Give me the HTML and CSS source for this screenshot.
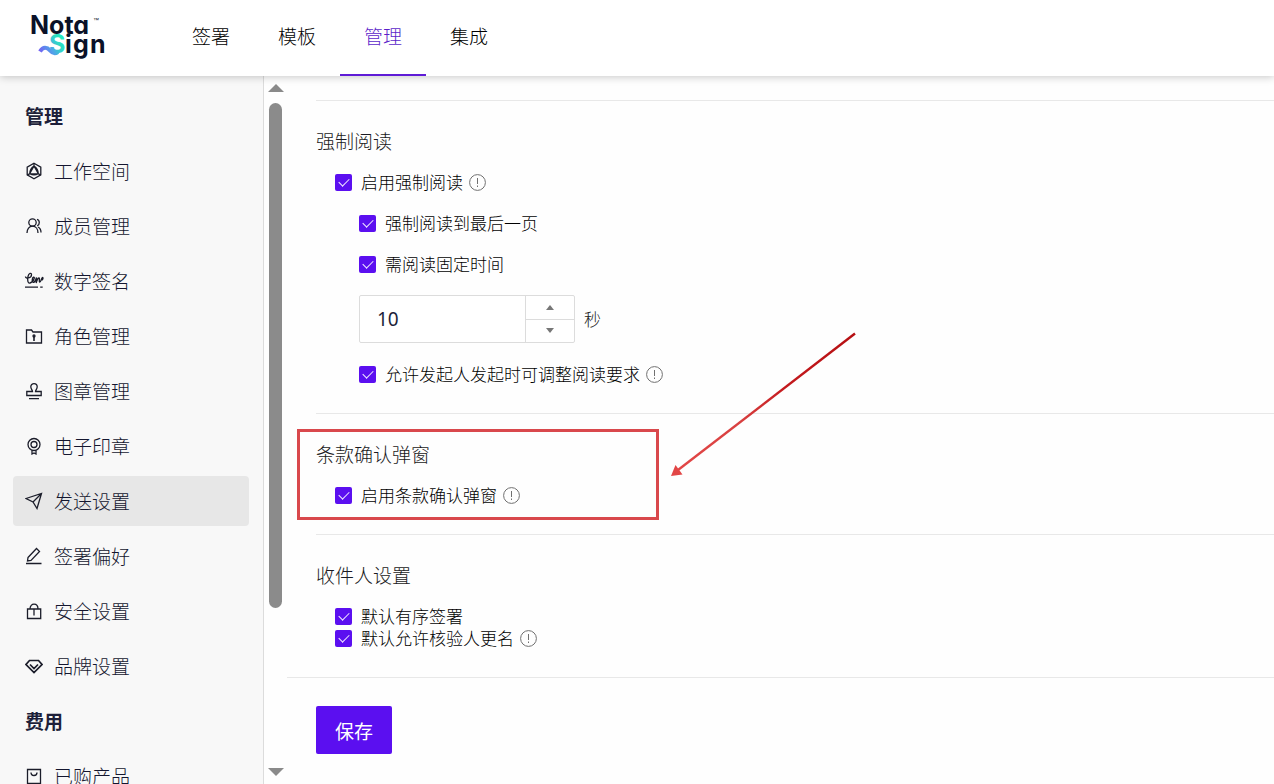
FILE: index.html
```html
<!DOCTYPE html>
<html lang="zh-CN">
<head>
<meta charset="utf-8">
<title>Nota Sign</title>
<link rel="stylesheet" href="styles.css">
</head>
<body>
<div class="app">
  <header class="header">
    <a class="logo" href="#" aria-label="Nota Sign">
      <svg width="80" height="50" viewBox="0 0 80 50">
        <defs>
          <linearGradient id="brand" gradientUnits="userSpaceOnUse" x1="6" y1="40" x2="30" y2="26">
            <stop offset="0" stop-color="#7a55f5"/><stop offset=".5" stop-color="#4fa5e8"/><stop offset=".8" stop-color="#2fd8c4"/><stop offset="1" stop-color="#25e8be"/>
          </linearGradient>
        </defs>
        <text class="logo-text" x="-2" y="21">Nota</text>
        <text class="logo-tm" x="61" y="9">™</text>
        <path d="M8 38.500c3-5 7-4.500 10-1s5 3.500 8 1.500" fill="none" stroke="url(#brand)" stroke-width="4"/>
        <text class="logo-text" x="17" y="40"><tspan fill="url(#brand)">S</tspan><tspan x="33">i</tspan><tspan x="41">g</tspan><tspan x="58">n</tspan></text>
      </svg>
    </a>
    <nav class="tabs">
      <a class="tab" href="#">签署</a>
      <a class="tab" href="#">模板</a>
      <a class="tab tab-active" href="#">管理</a>
      <a class="tab" href="#">集成</a>
    </nav>
  </header>
  <div class="body">
    <aside class="sidebar">
      <h2 class="group">管理</h2>
      <a class="item" href="#"><svg class="icon" viewBox="0 0 18 18"><path d="M9 1.200l6.800 3.900v7.800L9 16.800l-6.800-3.900V5.100z"/><path d="M9 4C6.500 5.500 4.800 8.500 4.700 11.800c2.600 1.400 6 1.400 8.600 0C13.200 8.500 11.500 5.500 9 4zM9 4L4.700 11.800h8.600zM9 1.200V4M2.200 12.900l2.500-1.100M15.800 12.900l-2.500-1.100"/></svg>工作空间</a>
      <a class="item" href="#"><svg class="icon" viewBox="0 0 18 18"><circle cx="7.500" cy="5.500" r="3.700"/><path d="M2 16c0-4 2.200-6.800 5.500-6.800S13 12 13 16M12 2.300c3 .8 3 5.400.2 6.600M13 10c2 1 3 3 3 5.500"/></svg>成员管理</a>
      <a class="item" href="#"><svg class="icon icon-wide" viewBox="0 0 18 18"><path d="M.5 4.500C.5 7 6.500 6.500 6.500 2.800 6.500.5 3.800.8 3 4.500s-.2 7 2 6.500 3.500-2.500 4.200-4.500S7.400 4.500 7.200 8s2.800 3.500 4.300-2.500L11.200 11c.8-3 1.800-5 2.800-5s-.3 4 .8 4 1.700-4.500 2.700-4.500.3 2.500-.7 2.500"/><path d="M0 15.200h13M15.200 15.200h2.500"/></svg>数字签名</a>
      <a class="item" href="#"><svg class="icon" viewBox="0 0 18 18"><path d="M1.500 3h5l1.500 2h8.500v11h-15z"/><path d="M9 9v5" stroke-width="1.600"/><circle cx="9" cy="9" r="1"/></svg>角色管理</a>
      <a class="item" href="#"><svg class="icon" viewBox="0 0 18 18"><path d="M7.500 9.500c0-1.500-1.700-2.500-1.700-4.700a3.200 3.200 0 0 1 6.400 0c0 2.200-1.700 3.200-1.700 4.700h5.700v4H1.800v-4zM4 16.700h10"/></svg>图章管理</a>
      <a class="item" href="#"><svg class="icon" viewBox="0 0 18 18"><circle cx="9" cy="7.500" r="6"/><circle cx="9" cy="7.500" r="3"/><path d="M7 13.500V17l2-1 2 1v-3.500"/></svg>电子印章</a>
      <a class="item item-active" href="#"><svg class="icon" viewBox="0 0 18 18"><path d="M1 6.500L16.500 1.500 12 16.500 8 10zM8 10l8.500-8.500"/></svg>发送设置</a>
      <a class="item" href="#"><svg class="icon" viewBox="0 0 18 18"><path d="M3 10.500l8.500-9 3 3-8.500 9-3.500.5zM1 16.500h15.500"/></svg>签署偏好</a>
      <a class="item" href="#"><svg class="icon" viewBox="0 0 18 18"><path d="M2.500 7h13.200v9.500H2.500zM5 7c0-6.500 8-6.500 8 0M9 7v6.500"/></svg>安全设置</a>
      <a class="item" href="#"><svg class="icon icon-strong" viewBox="0 0 18 18"><path d="M4.500 3.500h9l3.500 4-8 8-8-8zM5 7.500l4 4 4-4"/></svg>品牌设置</a>
      <h2 class="group">费用</h2>
      <a class="item" href="#"><svg class="icon" viewBox="0 0 18 18"><path d="M2.500 2.500h13v14h-13zM6 5.500c0 4 6 4 6 0"/></svg>已购产品</a>
    </aside>
    <div class="scroll" aria-hidden="true">
      <span class="arrow-up"></span>
      <div class="track"><div class="thumb"></div></div>
      <span class="arrow-down"></span>
    </div>
    <main class="main">
      <form class="form">
        <section class="section">
          <h3 class="title">强制阅读</h3>
          <div class="rows rows-spaced">
            <div class="row"><label class="check"><input type="checkbox" checked>启用强制阅读</label><svg class="info" viewBox="0 0 17 17"><circle cx="8.500" cy="8.500" r="7.900"/><path d="M8.500 4v6M8.500 11.500V13"/></svg></div>
            <div class="row row-nested"><label class="check"><input type="checkbox" checked>强制阅读到最后一页</label></div>
            <div class="row row-nested"><label class="check"><input type="checkbox" checked>需阅读固定时间</label></div>
            <div class="row-nested duration">
              <div class="number">
                <input class="number-input" id="seconds" type="number" value="10">
                <div class="steps">
                  <button class="step" type="button" aria-label="增加"><span class="step-up"></span></button>
                  <button class="step" type="button" aria-label="减少"><span class="step-down"></span></button>
                </div>
              </div>
              <label for="seconds">秒</label>
            </div>
            <div class="row row-nested"><label class="check"><input type="checkbox" checked>允许发起人发起时可调整阅读要求</label><svg class="info" viewBox="0 0 17 17"><circle cx="8.500" cy="8.500" r="7.900"/><path d="M8.500 4v6M8.500 11.500V13"/></svg></div>
          </div>
        </section>
        <section class="section">
          <h3 class="title">条款确认弹窗</h3>
          <div class="rows">
            <div class="row"><label class="check"><input type="checkbox" checked>启用条款确认弹窗</label><svg class="info" viewBox="0 0 17 17"><circle cx="8.500" cy="8.500" r="7.900"/><path d="M8.500 4v6M8.500 11.500V13"/></svg></div>
          </div>
          <div class="highlight"></div>
          <svg class="pointer" width="190" height="150" viewBox="0 0 190 150">
            <defs><linearGradient id="red" gradientUnits="userSpaceOnUse" x1="185" y1="3" x2="8" y2="140"><stop offset="0" stop-color="#b50f12"/><stop offset=".4" stop-color="#c41a1e"/><stop offset=".65" stop-color="#d84040"/><stop offset="1" stop-color="#e24646"/></linearGradient></defs>
            <path d="M184 3.500L7 140" fill="none" stroke="url(#red)" stroke-width="2.400"/>
            <path d="M0 146l4.500-11 7 9.500z" fill="#e24646"/>
          </svg>
        </section>
        <section class="section">
          <h3 class="title">收件人设置</h3>
          <div class="rows">
            <div class="row"><label class="check"><input type="checkbox" checked>默认有序签署</label></div>
            <div class="row"><label class="check"><input type="checkbox" checked>默认允许核验人更名</label><svg class="info" viewBox="0 0 17 17"><circle cx="8.500" cy="8.500" r="7.900"/><path d="M8.500 4v6M8.500 11.500V13"/></svg></div>
          </div>
        </section>
        <div class="footer"><button class="save" type="button">保存</button></div>
      </form>
    </main>
  </div>
</div>
</body>
</html>
```
FILE: styles.css
```css
* { box-sizing: border-box; }
body {
  margin: 0;
  font-family: "Noto Sans CJK SC", sans-serif;
  font-weight: 300;
  font-size: 17px;
  color: #000;
  background: #fefefe;
}
a { color: inherit; text-decoration: none; }
h2, h3 { margin: 0; }

.app { display: flex; flex-direction: column; height: 100vh; overflow: hidden; }

.header {
  display: flex;
  flex: none;
  height: 76px;
  padding-left: 32px;
  background: #fff;
  box-shadow: 0 1px 8px rgba(0, 0, 0, 0.22);
  z-index: 1;
}
.logo { width: 136px; padding-top: 13px; }
.logo svg { display: block; overflow: visible; }
.logo-text { font: 700 25px Inter, sans-serif; font-feature-settings: "cv11"; fill: #0a1128; }
.logo-tm { font: 400 6px "Liberation Sans", sans-serif; fill: #0a1128; }
.tabs { display: flex; }
.tab {
  padding: 0 24px;
  font-size: 19px;
  line-height: 72px;
  border-bottom: 2px solid transparent;
}
.tab-active { color: #5c1fc9; border-bottom-color: #5f1bd6; }

.body { display: flex; flex: 1; min-height: 0; }

.sidebar {
  display: flex;
  flex-direction: column;
  gap: 5px;
  flex: none;
  width: 264px;
  padding: 15px 14px 0 13px;
  overflow: hidden;
  background: #f8f8f8;
  border-right: 1px solid #dcdcdc;
  color: #14162f;
}
.group {
  flex: none;
  padding-left: 12px;
  font-size: 19px;
  line-height: 50px;
  font-weight: 700;
  color: #1d1f3a;
}
.item {
  display: flex;
  flex: none;
  align-items: center;
  gap: 11px;
  height: 50px;
  padding-left: 12px;
  border-radius: 4px;
  font-size: 19px;
  line-height: 24px;
}
.item-active { background: #e7e7e7; }
.icon { width: 18px; height: 18px; fill: none; stroke: #1b1d2a; stroke-width: 1.3; }
.icon-wide { overflow: visible; }
.icon-strong { stroke-width: 1.7; }

.scroll {
  display: flex;
  flex-direction: column;
  align-items: center;
  flex: none;
  width: 23px;
  padding: 8px 0;
}
.arrow-up, .arrow-down { border: 8px solid transparent; }
.arrow-up { border-top: 0; border-bottom-color: #8a8a8a; }
.arrow-down { border-bottom: 0; border-top-color: #8a8a8a; }
.track { flex: 1; padding-top: 11px; }
.thumb { width: 13px; height: 76%; border-radius: 7px; background: #8b8b8b; }

.main { flex: 1; min-width: 0; padding-top: 24px; }
.section {
  position: relative;
  margin-left: 29px;
  padding: 28px 0;
  border-top: 1px solid #e8e8e8;
}
.title { margin-bottom: 18px; font-size: 19px; line-height: 24px; font-weight: 300; color: #1a1a22; }
.rows { display: flex; flex-direction: column; padding-left: 19px; }
.rows-spaced { gap: 19px; }
.row { display: flex; align-items: center; gap: 6px; height: 22px; }
.row-nested { margin-left: 24px; }
.check { display: flex; align-items: center; gap: 9px; line-height: 22px; }
.check input {
  appearance: none;
  display: grid;
  place-items: center;
  width: 17px;
  height: 17px;
  margin: 0;
  border-radius: 2px;
  background: #5b0ff0;
}
.check input::after {
  content: "";
  width: 9px;
  height: 5px;
  margin-bottom: 3px;
  border: solid #f0e8ff;
  border-width: 0 0 1px 1px;
  transform: rotate(-45deg);
}
.info { width: 17px; height: 17px; fill: none; stroke: #707070; stroke-width: 1; }

.duration { display: flex; align-items: center; gap: 9px; height: 50px; line-height: 22px; color: #222; }
.number {
  display: flex;
  width: 216px;
  height: 48px;
  border: 1px solid #dcdcdc;
  border-radius: 2px;
  background: #fff;
}
.number-input {
  appearance: textfield;
  flex: 1;
  min-width: 0;
  padding: 0 17px;
  border: 0;
  outline: 0;
  background: none;
  font: 400 19px "Noto Sans", "Noto Sans CJK SC", sans-serif;
  color: #1d1f3a;
}
.number-input::-webkit-inner-spin-button { appearance: none; margin: 0; }
.steps { display: flex; flex-direction: column; width: 49px; border-left: 1px solid #dcdcdc; }
.step { display: grid; place-items: center; flex: 1; padding: 0; border: 0; background: none; }
.step + .step { border-top: 1px solid #dcdcdc; }
.step-up, .step-down { border: 4px solid transparent; }
.step-up { border-top: 0; border-bottom: 5px solid #777; }
.step-down { border-bottom: 0; border-top: 5px solid #777; }

.highlight {
  position: absolute;
  top: 15px;
  left: -19px;
  width: 362px;
  height: 91px;
  border: 3px solid #d9484c;
}
.pointer { position: absolute; left: 355px; top: -84px; }

.footer { padding: 28px 29px; border-top: 1px solid #e8e8e8; }
.save {
  height: 48px;
  padding: 0 19px;
  border: 0;
  border-radius: 2px;
  background: #5b0ff0;
  color: #fff;
  font: inherit;
  font-size: 19px;
  font-weight: 400;
}
```
